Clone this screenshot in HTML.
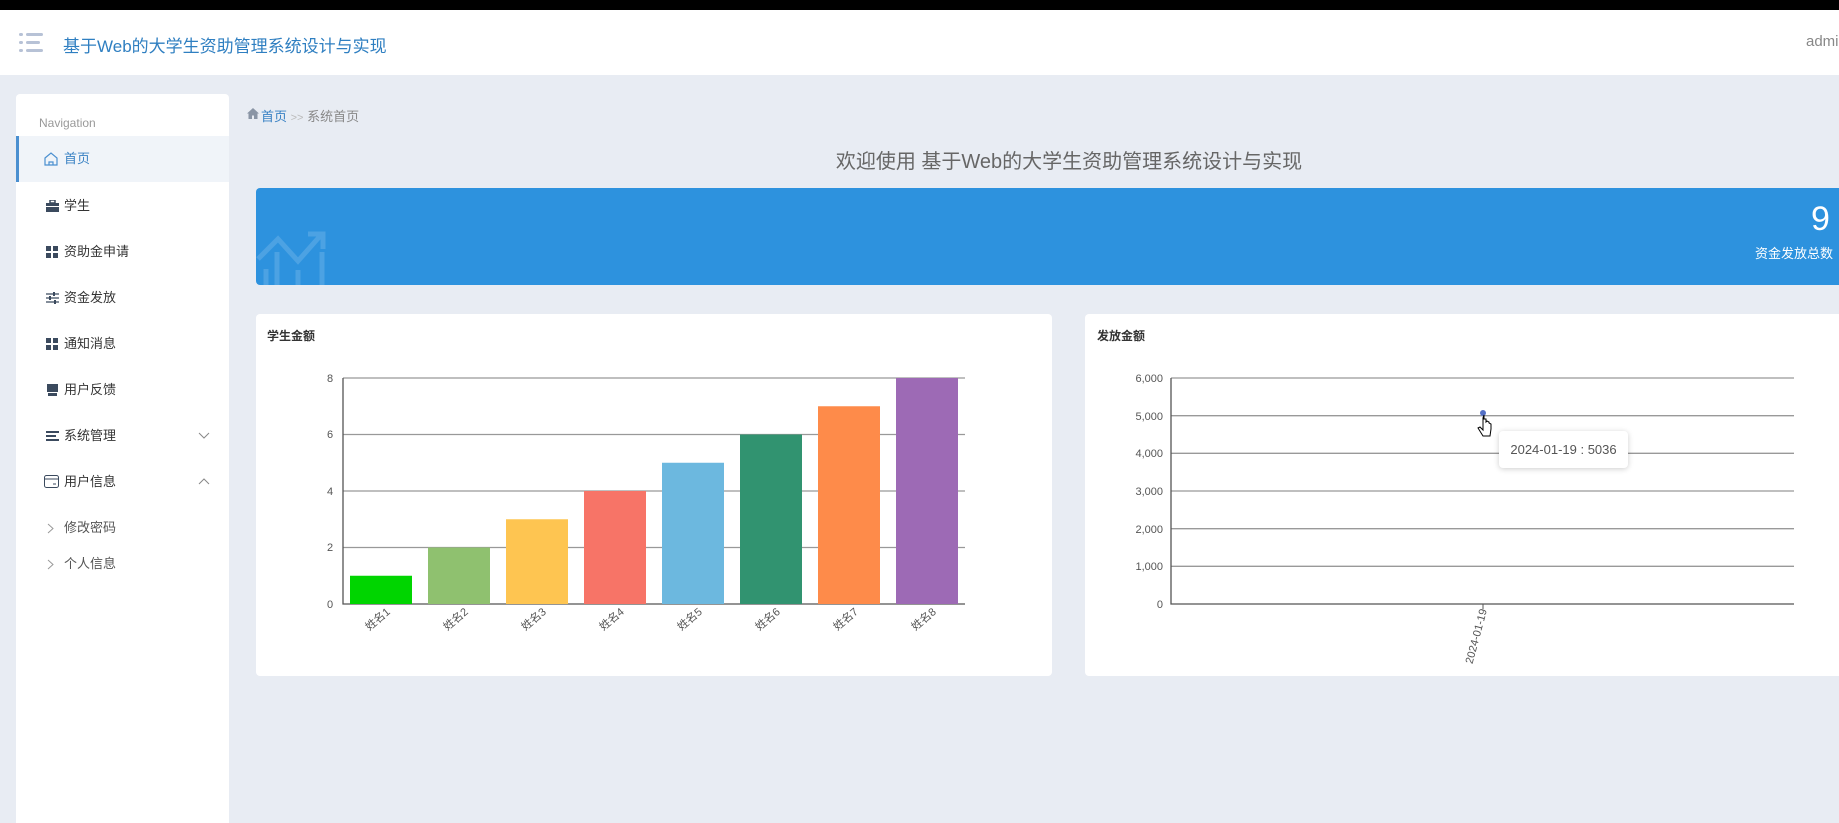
<!DOCTYPE html><html><head><meta charset="utf-8"><style>
*{margin:0;padding:0;box-sizing:border-box}
body{width:1839px;height:823px;overflow:hidden;background:#e8ecf3;font-family:"Liberation Sans","Noto Sans CJK SC",sans-serif;position:relative}
.abs{position:absolute}
.top{left:0;top:0;width:1839px;height:10px;background:#000}
.hdr{left:0;top:10px;width:1839px;height:65px;background:#fff}
.side{left:16px;top:94px;width:213px;height:729px;background:#fff;border-radius:4px 4px 0 0}
.nav{position:absolute;left:0;width:213px;height:40px;font-size:13px;color:#333;line-height:40px}
.nav span.t{position:absolute;left:48px}
.ic{position:absolute;left:30px;top:14px;width:13px;height:12px}
</style></head><body>
<div class="abs top"></div>
<div class="abs hdr">
 <svg class="abs" style="left:19px;top:23px" width="25" height="20"><g fill="#b7c2d6"><rect x="0" y="0" width="4" height="3" rx="1.5"/><rect x="7" y="0" width="17" height="3" rx="1.5"/><rect x="0" y="8" width="4" height="3" rx="1.5"/><rect x="7" y="8" width="14" height="3" rx="1.5"/><rect x="0" y="16" width="4" height="3" rx="1.5"/><rect x="7" y="16" width="17" height="3" rx="1.5"/></g></svg>
 <div class="abs" style="left:63px;top:22px;font-size:17px;color:#2f7fc1">基于Web的大学生资助管理系统设计与实现</div>
 <div class="abs" style="left:1806px;top:23px;font-size:15px;color:#888">admin</div>
</div>
<div class="abs side">
 <div class="abs" style="left:23px;top:22px;font-size:12px;color:#999">Navigation</div>
 <div class="nav" style="top:42px;height:46px;line-height:46px;background:#f0f4f9;border-left:3px solid #4a8fd0;color:#3a82c4">
  <svg class="abs" style="left:25px;top:16px" width="14" height="14"><path d="M1 6L7 1l6 5v7H1z M5 13v-3h4v3" fill="none" stroke="#4a8fd0" stroke-width="1.2"/></svg><span class="t" style="left:45px">首页</span></div>
 <div class="nav" style="top:92px"><svg class="ic"><rect x="0" y="3" width="13" height="9" fill="#3b4a5e"/><rect x="4" y="0" width="5" height="3" fill="none" stroke="#3b4a5e" stroke-width="1.5"/><rect x="0" y="6" width="13" height="1" fill="#fff"/></svg><span class="t">学生</span></div>
 <div class="nav" style="top:138px"><svg class="ic"><g fill="#3b4a5e"><rect width="5" height="5"/><rect x="7" width="5" height="5"/><rect y="7" width="5" height="5"/><rect x="7" y="7" width="5" height="5"/></g></svg><span class="t">资助金申请</span></div>
 <div class="nav" style="top:184px"><svg class="ic"><g stroke="#3b4a5e" stroke-width="1.3"><path d="M0 2h13M0 6h13M0 10h13"/></g><g fill="#3b4a5e"><rect x="7" y="0" width="2" height="4"/><rect x="3" y="4" width="2" height="4"/><rect x="8" y="8" width="2" height="4"/></g></svg><span class="t">资金发放</span></div>
 <div class="nav" style="top:230px"><svg class="ic"><g fill="#3b4a5e"><rect width="5" height="5"/><rect x="7" width="5" height="5"/><rect y="7" width="5" height="5"/><rect x="7" y="7" width="5" height="5"/></g></svg><span class="t">通知消息</span></div>
 <div class="nav" style="top:276px"><svg class="ic"><path d="M1 0h11v8H1z" fill="#3b4a5e"/><path d="M2 9h9v3H2z" fill="#3b4a5e"/></svg><span class="t">用户反馈</span></div>
 <div class="nav" style="top:322px"><svg class="ic"><g fill="#3b4a5e"><rect y="1" width="13" height="2"/><rect y="5" width="10" height="2"/><rect y="9" width="13" height="2"/></g></svg><span class="t">系统管理</span><svg class="abs" style="left:182px;top:16px" width="12" height="8"><path d="M1 1l5 5 5-5" fill="none" stroke="#888"/></svg></div>
 <div class="nav" style="top:368px"><svg class="ic" style="width:15px;height:14px;left:28px;top:13px"><rect x=".5" y=".5" width="14" height="12" rx="2" fill="none" stroke="#3b4a5e"/><path d="M1 4h13M9 9h3" stroke="#3b4a5e"/></svg><span class="t">用户信息</span><svg class="abs" style="left:182px;top:16px" width="12" height="8"><path d="M1 6l5-5 5 5" fill="none" stroke="#888"/></svg></div>
 <div class="nav" style="top:414px;color:#555"><svg class="abs" style="left:31px;top:15px" width="8" height="11"><path d="M1 1l5 4.5L1 10" fill="none" stroke="#999"/></svg><span class="t" style="left:48px">修改密码</span></div>
 <div class="nav" style="top:450px;color:#555"><svg class="abs" style="left:31px;top:15px" width="8" height="11"><path d="M1 1l5 4.5L1 10" fill="none" stroke="#999"/></svg><span class="t" style="left:48px">个人信息</span></div>
</div>
<svg class="abs" style="left:247px;top:108px" width="12" height="11"><path d="M6 0L0 5.5h1.5V11h3.5V7.5h2V11h3.5V5.5H12z" fill="#8a95a5"/></svg>
<div class="abs" style="left:261px;top:106px;font-size:13px;color:#3a82c4">首页 <span style="color:#bbb;font-size:11px">&gt;&gt;</span> <span style="color:#888">系统首页</span></div>
<div class="abs" style="left:0;width:2138px;top:145px;text-align:center;font-size:20px;color:#666">欢迎使用 基于Web的大学生资助管理系统设计与实现</div>
<div class="abs" style="left:256px;top:188px;width:1600px;height:97px;background:#2d92de;border-radius:4px">
 <svg class="abs" style="left:0;top:36px" width="75" height="61"><g fill="none" stroke="#5aaae6" stroke-width="5" opacity=".7"><path d="M2 35L22 15 42 37 65 11"/><path d="M52 10h15v15"/><path d="M21 28v33M42 46v15M66 28v33M10 45v16"/></g></svg>
 <div class="abs" style="left:1555px;top:12px;font-size:34px;color:#fff">9</div>
 <div class="abs" style="left:1499px;top:55px;font-size:13px;color:#fff">资金发放总数</div>
</div>
<div class="abs" style="left:256px;top:314px;width:796px;height:362px;background:#fff;border-radius:4px">
 <div class="abs" style="left:11px;top:13px;font-size:12px;color:#333;font-weight:bold">学生金额</div>
</div>
<svg class="abs" style="left:256px;top:314px" width="800" height="362" font-family="Liberation Sans,Noto Sans CJK SC,sans-serif" font-size="11" fill="#555">
 <g stroke="#999" stroke-width="1.3"><path d="M87 64H709M87 120.5H709M87 177H709M87 233.5H709"/></g>
 <path d="M87 64V290H709" fill="none" stroke="#555" stroke-width="1.3"/>
 <g fill="#555"><text x="71" y="68">8</text><text x="71" y="124">6</text><text x="71" y="181">4</text><text x="71" y="237">2</text><text x="71" y="294">0</text></g>
 <rect x="94" y="261.75" width="62" height="28.25" fill="#00d500"/>
 <rect x="172" y="233.5" width="62" height="56.5" fill="#8fc16f"/>
 <rect x="250" y="205.25" width="62" height="84.75" fill="#fec551"/>
 <rect x="328" y="177" width="62" height="113" fill="#f77467"/>
 <rect x="406" y="148.75" width="62" height="141.25" fill="#6cb8df"/>
 <rect x="484" y="120.5" width="62" height="169.5" fill="#319370"/>
 <rect x="562" y="92.25" width="62" height="197.75" fill="#fe8b4a"/>
 <rect x="640" y="64" width="62" height="226" fill="#9d6ab5"/>
 <g font-size="11" fill="#555">
  <text transform="translate(124,308) rotate(-40)" text-anchor="middle">姓名1</text>
  <text transform="translate(202,308) rotate(-40)" text-anchor="middle">姓名2</text>
  <text transform="translate(280,308) rotate(-40)" text-anchor="middle">姓名3</text>
  <text transform="translate(358,308) rotate(-40)" text-anchor="middle">姓名4</text>
  <text transform="translate(436,308) rotate(-40)" text-anchor="middle">姓名5</text>
  <text transform="translate(514,308) rotate(-40)" text-anchor="middle">姓名6</text>
  <text transform="translate(592,308) rotate(-40)" text-anchor="middle">姓名7</text>
  <text transform="translate(670,308) rotate(-40)" text-anchor="middle">姓名8</text>
 </g>
</svg>
<div class="abs" style="left:1085px;top:314px;width:800px;height:362px;background:#fff;border-radius:4px">
 <div class="abs" style="left:12px;top:13px;font-size:12px;color:#333;font-weight:bold">发放金额</div>
</div>
<svg class="abs" style="left:1085px;top:314px" width="754" height="362" font-family="Liberation Sans,sans-serif" font-size="11" fill="#555">
 <g stroke="#999" stroke-width="1.3"><path d="M86 64H709M86 101.7H709M86 139.3H709M86 177H709M86 214.7H709M86 252.3H709"/></g>
 <path d="M86 64V290H709" fill="none" stroke="#555" stroke-width="1.3"/>
 <g text-anchor="end"><text x="78" y="68">6,000</text><text x="78" y="106">5,000</text><text x="78" y="143">4,000</text><text x="78" y="181">3,000</text><text x="78" y="219">2,000</text><text x="78" y="256">1,000</text><text x="78" y="294">0</text></g>
 <path d="M398 290v5" stroke="#555"/>
 <text transform="translate(402,296) rotate(-75)" text-anchor="end" font-size="11">2024-01-19</text>
 <circle cx="398" cy="99" r="3" fill="#5470c6"/>
 <path d="M398 104v12l-3-3-2 1 5 8h7l1-7v-5l-2-1v-1l-2-1-1 1v-3h-2v-4z" fill="#fff" stroke="#000" stroke-width="1"/>
</svg>
<div class="abs" style="left:1499px;top:431px;width:129px;height:37px;background:#fff;border-radius:4px;box-shadow:0 1px 6px rgba(0,0,0,.2);font-size:13px;color:#555;line-height:37px;text-align:center">2024-01-19 : 5036</div>
</body></html>
